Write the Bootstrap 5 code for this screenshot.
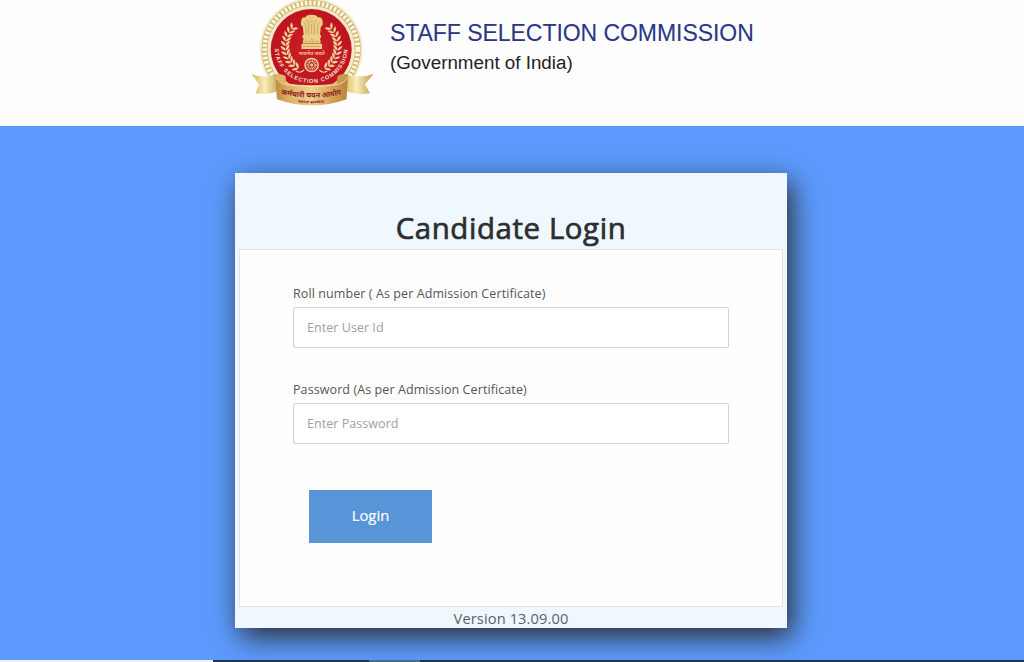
<!DOCTYPE html>
<html lang="en">
<head>
<meta charset="utf-8">
<meta name="viewport" content="width=device-width, initial-scale=1">
<title>Candidate Login</title>
<link href="https://cdn.jsdelivr.net/npm/bootstrap@5.3.0/dist/css/bootstrap.min.css" rel="stylesheet">
<style>
  body { height: 662px; overflow: hidden; background: #5c9bfd; font-family: "Open Sans", "Noto Sans", sans-serif; color: #333; }
  .site-header { height: 126px; padding-left: 245px; background: #fefefe; }
  .emblem { width: 135px; height: 110px; flex: none; }
  .org { padding: 18px 0 0 10px; font-family: "Liberation Sans", Arial, sans-serif; white-space: nowrap; }
  .org-name { font-size: 23px; line-height: 30px; color: #2c3689; letter-spacing: -.05px; -webkit-text-stroke: .1px #2c3689; }
  .org-sub { font-size: 18.8px; line-height: 30px; color: #222; }
  .stage { padding-top: 47px; }
  .login-box { width: 552px; height: 455px; margin-left: 235px; padding: 0 4px; background: #eff7ff; box-shadow: 5px 9px 26px rgba(40,40,40,.95); }
  .login-title { height: 76px; padding-top: 35px; font-size: 29.4px; line-height: 40px; font-weight: 400; letter-spacing: .6px; color: #2b2e32; -webkit-text-stroke: .7px #2b2e32; }
  .panel { height: 358px; padding: 35px 53px 0; background: #fefefe; border: 1px solid #dfe4e8; }
  .field-label { font-size: 12.5px; line-height: 17px; height: 22px; letter-spacing: .09px; color: #555; }
  .field { height: 41px; padding: 0 13px; font-size: 12.6px; color: #555; border: 1.5px solid #d2d2d2; border-radius: 2px; }
  .field::placeholder { color: #a0a0a0; }
  .field-gap { height: 33px; }
  .login-btn { width: 123px; height: 53px; margin: 46px 0 0 16px; padding: 0 0 2px; font-size: 14.8px; color: #fff; background: #5894d8; border: 0; -webkit-text-stroke: .2px #fff; }
  .version { font-size: 14.6px; line-height: 22px; letter-spacing: .13px; color: #5b6067; }
  .strip { height: 2px; }
  .strip-light { width: 213px; background: #eef2fa; }
  .strip-dark { background: #1d3453; }
  .strip-tab { width: 51px; background: #4c6a8a; }
</style>
</head>
<body class="d-flex flex-column">
<header class="site-header d-flex align-items-start flex-shrink-0">
  <svg class="emblem" viewBox="0 0 135 110" role="img" aria-label="Staff Selection Commission emblem">
    <defs>
      <linearGradient id="ribbon" x1="0" x2="1">
        <stop offset="0" stop-color="#b98a3c"/><stop offset=".2" stop-color="#dcb26a"/><stop offset=".5" stop-color="#efd092"/><stop offset=".75" stop-color="#d6a75b"/><stop offset="1" stop-color="#b78338"/>
      </linearGradient>
      <linearGradient id="tail" x1="0" x2="1">
        <stop offset="0" stop-color="#d6b35a"/><stop offset=".45" stop-color="#f8edb8"/><stop offset="1" stop-color="#c3994b"/>
      </linearGradient>
      <radialGradient id="disc"><stop offset="0" stop-color="#cb2029"/><stop offset="1" stop-color="#bd1420"/></radialGradient>
      <path id="arcText" d="M29.800 48.500A36.400 34.500 0 0 0 102.600 48.500"/>
      <g id="leaf" fill="#efd29b">
        <path d="M-26 0q-4-1-4.600-5.200q4.600 1 4.600 5.200z"/>
        <path d="M-26 0q4-1 4.600-5.200q-4.600 1-4.600 5.200z"/>
      </g>
      <g id="laurel">
        <use href="#leaf" transform="rotate(40)"/><use href="#leaf" transform="rotate(30)"/><use href="#leaf" transform="rotate(20)"/><use href="#leaf" transform="rotate(10)"/><use href="#leaf"/><use href="#leaf" transform="rotate(-10)"/><use href="#leaf" transform="rotate(-20)"/><use href="#leaf" transform="rotate(-30)"/><use href="#leaf" transform="rotate(-40)"/><use href="#leaf" transform="rotate(-50)"/><use href="#leaf" transform="rotate(-60)"/>
      </g>
    </defs>
    <circle cx="66.200" cy="49.500" r="51.500" fill="#f3ebcf"/>
    <circle cx="66.200" cy="49.500" r="46.600" fill="none" stroke="#d5bb72" stroke-width="6"/>
    <circle cx="66.200" cy="49.500" r="46.600" fill="none" stroke="#fffbea" stroke-width="4.600" stroke-dasharray="2.3 1.960"/>
    <circle cx="66.200" cy="49.500" r="42.200" fill="#f5e8c5"/>
    <circle cx="66.200" cy="49.500" r="40.500" fill="url(#disc)"/>
    <use href="#laurel" transform="translate(66.500 46)"/>
    <use href="#laurel" transform="translate(66.500 46) scale(-1 1)"/>
    <!-- lion capital -->
    <g fill="#ecd087">
      <path d="M60.500 17.500q.4-2.800 6-2.800t6.200 2.800q3.600-.8 4.600 2.200l.5 4q-.2 2.300-2 3l-.8 8.300H58.700l-.9-8.300q-1.900-.8-2-3l.6-4q1-3 4.100-2.200z"/>
      <path d="M57.500 35h18.500v3H57.500zM58.500 38h16.500l.8 5.600H57.700zM56.500 44h20.500v5H56.500z"/>
    </g>
    <g fill="none" stroke="#b9873f" stroke-width=".6">
      <path d="M62 19.500q0 3 1.800 3.700v11.500M71 19.500q0 3-1.800 3.700v11.500M59 22.500q1.300 1.200 2.200 5v7M74.500 22.500q-1.300 1.200-2.200 5v7M64.800 18.300h1M67.500 18.300h1M65 21.300q1.600 1 3.200 0M66.600 24v10"/>
      <circle cx="66.700" cy="41" r="1.700"/>
      <path d="M59.500 41.300h3.500M70.300 41.300h3.500M58 46.500h17.500"/>
    </g>
    <text x="66.700" y="55" font-size="4.300" font-weight="600" fill="#edc78c" text-anchor="middle" textLength="26" lengthAdjust="spacingAndGlyphs">सत्यमेव जयते</text>
    <!-- wheel -->
    <circle cx="66.600" cy="65" r="6.600" fill="#b82a2a" stroke="#efd29b" stroke-width="1.500"/>
    <circle cx="66.600" cy="65" r="3.700" fill="none" stroke="#efd29b" stroke-width="2.600" stroke-dasharray=".75 .7"/>
    <circle cx="66.600" cy="65" r="1.500" fill="#efd29b"/>
    <path d="M59 70q-4 4-8 1M74.200 70q4 4 8 1" fill="none" stroke="#efd29b" stroke-width="1.100"/>
    <text font-family="Liberation Sans, Arial, sans-serif" font-size="5.600" font-weight="700" fill="#f8e2cc"><textPath href="#arcText" textLength="110" lengthAdjust="spacing">STAFF SELECTION COMMISSION</textPath></text>
    <!-- ribbon -->
    <path d="M6.500 74q11 4.500 25.500 1l4 15q-14 5.500-25.500 3.200l3.500-9z" fill="url(#tail)"/>
    <path d="M128.500 74q-12 4.500-27 1l-4 15q14 5.500 27.500 3.200l-5-9z" fill="url(#tail)"/>
    <path d="M30 74.500q5-1.700 10.500 1.500l1 8.500-9 4z" fill="#dcb76b"/>
    <path d="M103 74.500q-5-1.700-10.500 1.500l-1 8.500 9 4z" fill="#c99b4d"/>
    <path d="M30 74.500q2 7 11 8.800 25.500 4 50.500 0 9-1.800 11.500-8.800l-1.500 24.800q-34.500 12.500-69.500 0z" fill="url(#ribbon)"/>
    <path d="M30.500 77q3 6 11 7.500 25.500 4 50.500 0 8-1.500 10.500-7.500" fill="none" stroke="#fbeebc" stroke-width=".8"/>
    <path id="ribbonText" d="M36 94q31 7.500 62 0" fill="none"/>
    <path id="ribbonSub" d="M52.500 102.500q14 1.800 28 0" fill="none"/>
    <text font-size="7.300" font-weight="700" fill="#8d231d"><textPath href="#ribbonText" textLength="61" lengthAdjust="spacingAndGlyphs">कर्मचारी चयन आयोग</textPath></text>
    <text font-size="3.800" font-weight="700" fill="#8d231d"><textPath href="#ribbonSub" textLength="27" lengthAdjust="spacingAndGlyphs">भारत सरकार</textPath></text>
  </svg>
  <div class="org">
    <div class="org-name">STAFF SELECTION COMMISSION</div>
    <div class="org-sub">(Government of India)</div>
  </div>
</header>
<main class="stage flex-grow-1 overflow-hidden">
  <section class="login-box">
    <h1 class="login-title text-center mb-0">Candidate Login</h1>
    <form class="panel">
      <label class="field-label d-block" for="roll">Roll number ( As per Admission Certificate)</label>
      <input class="field form-control" id="roll" type="text" placeholder="Enter User Id">
      <div class="field-gap"></div>
      <label class="field-label d-block" for="pass">Password (As per Admission Certificate)</label>
      <input class="field form-control" id="pass" type="password" placeholder="Enter Password">
      <button class="login-btn btn rounded-0" type="button">Login</button>
    </form>
    <div class="version text-center">Version 13.09.00</div>
  </section>
</main>
<footer class="strip d-flex flex-shrink-0">
  <div class="strip-light"></div>
  <div class="strip-dark" style="width:156px"></div>
  <div class="strip-tab"></div>
  <div class="strip-dark flex-grow-1"></div>
</footer>
<script src="https://cdn.jsdelivr.net/npm/bootstrap@5.3.0/dist/js/bootstrap.bundle.min.js"></script>
</body>
</html>
